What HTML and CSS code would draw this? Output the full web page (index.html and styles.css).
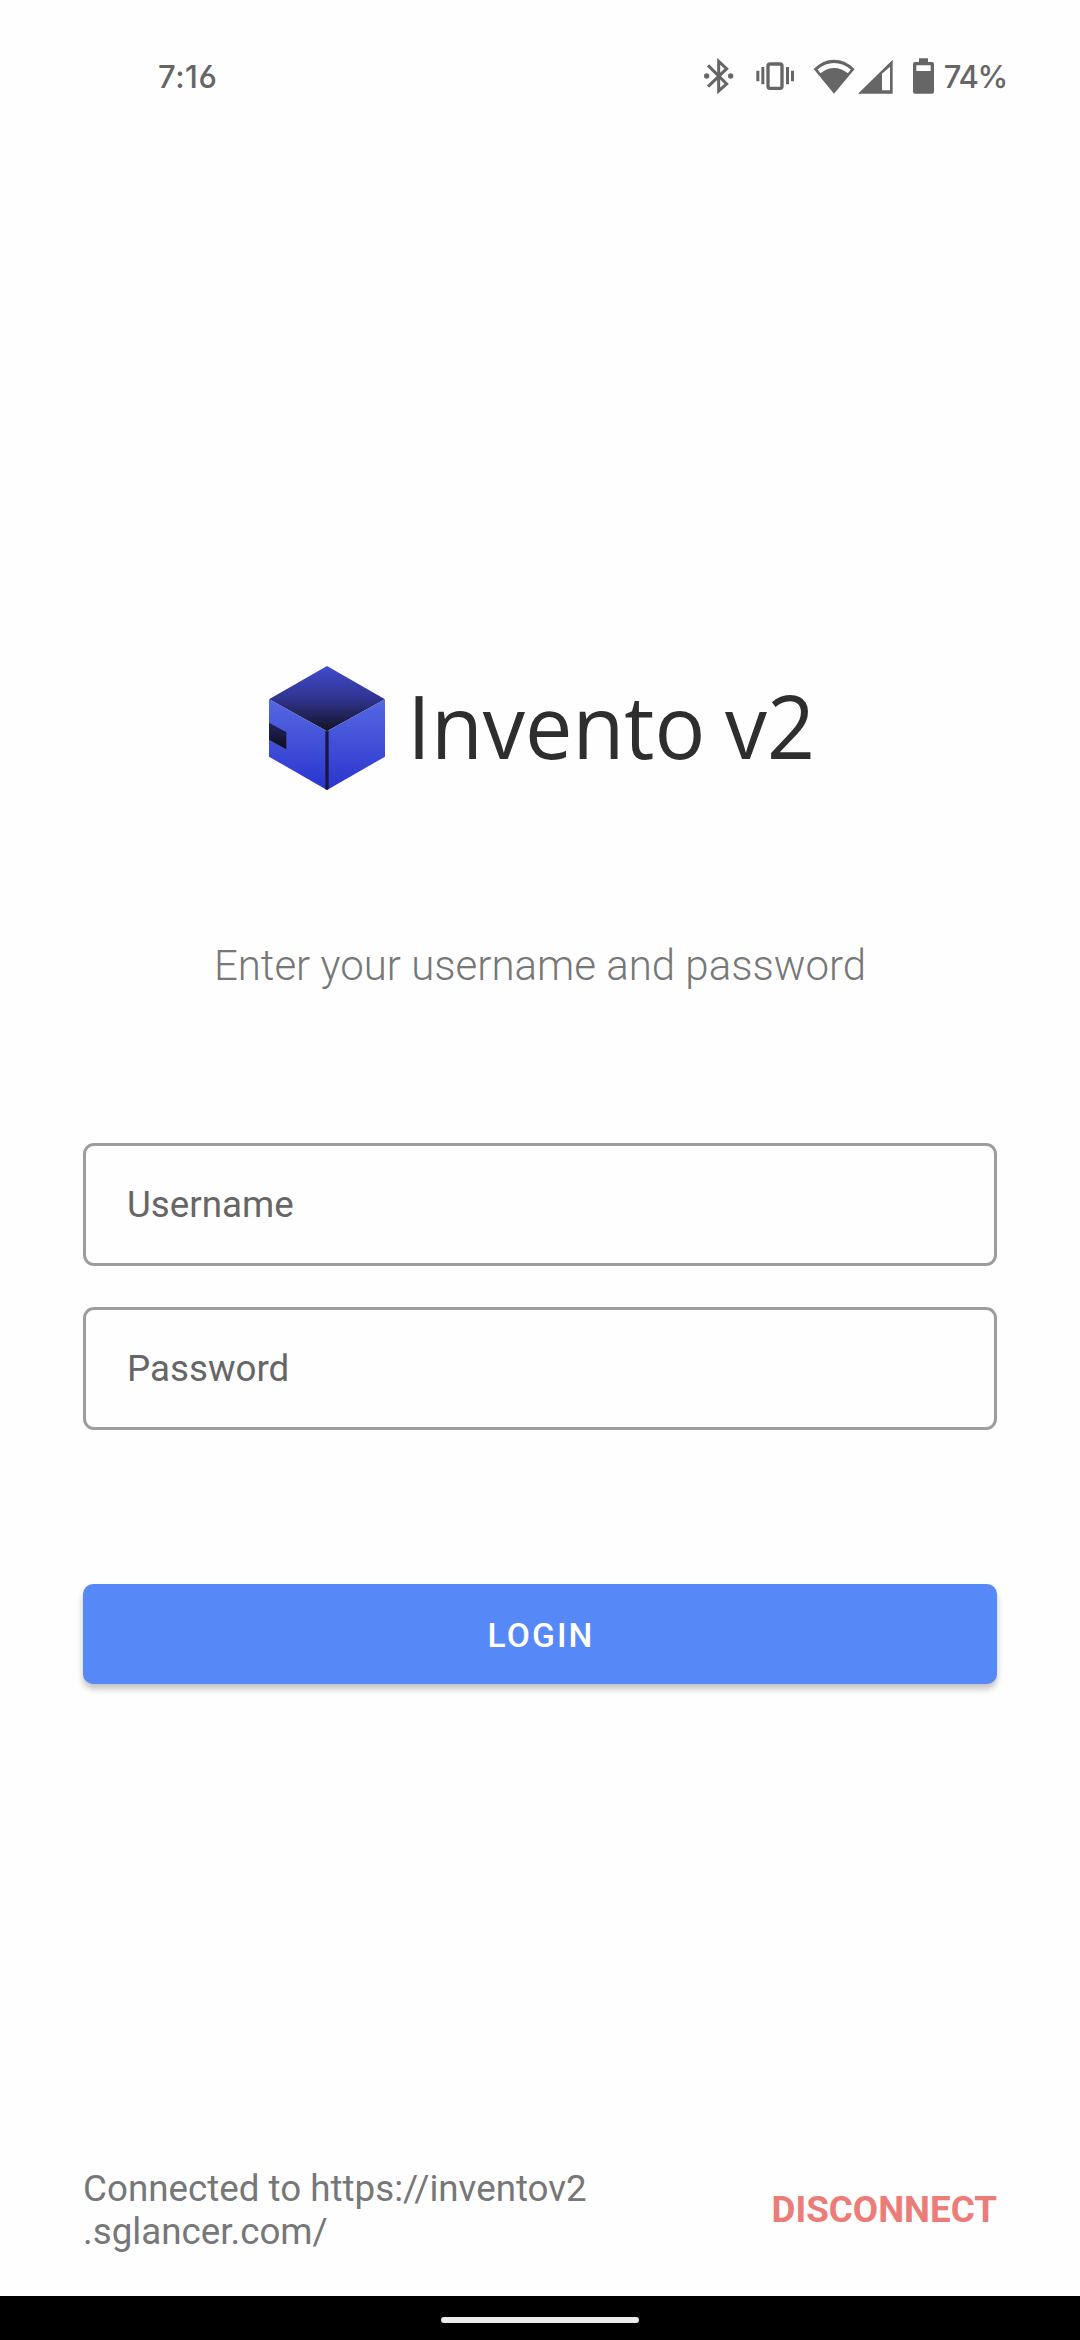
FILE: index.html
```html
<!DOCTYPE html>
<html lang="en">
<head>
<meta charset="utf-8">
<title>Invento v2</title>
<link rel="stylesheet" href="styles.css">
</head>
<body>
<header class="status">
  <span class="clock">7:16</span>
  <div class="status-icons">
    <svg class="bluetooth" width="32" height="36" viewBox="38 52 96 108"><path d="M53 74 109 130 85 151V62L109 84 53 138" fill="none" stroke="#666" stroke-width="9"/><circle cx="49" cy="106" r="8"/><circle cx="121" cy="106" r="8"/></svg>
    <svg class="vibrate" width="40" height="30" viewBox="192 62 120 90"><rect x="231" y="71" width="42" height="73" rx="6" fill="none" stroke="#666" stroke-width="10"/><path d="M211 80h9v52h-9zM196 91h9v32h-9zM285 80h9v52h-9zM300 91h9v32h-9z"/></svg>
    <svg class="wifi" width="42" height="35" viewBox="367 54 126 105"><path d="M430 158 369 84Q396 56 430 56T492 84Z"/><path d="M385 91Q430 56 476 91" fill="none" stroke="#fefefe" stroke-width="14"/></svg>
    <svg class="signal" width="35" height="35" viewBox="501 54 105 105"><path fill-rule="evenodd" d="M501 158 605 56V158ZM573 98V148H597V77Z"/></svg>
    <svg class="battery" width="21" height="36" viewBox="66 51 63 108"><path fill-rule="evenodd" d="M84 52h27v11h12q6 0 6 6v83q0 6-6 6H72q-6 0-6-6V69q0-6 6-6h12zM76 73v17h43V73z"/></svg>
    <span class="percent">74%</span>
  </div>
</header>

<main class="login">
  <h1 class="brand">
    <svg class="logo" width="116" height="124" viewBox="57 48 348 372">
      <defs>
        <linearGradient id="inside" x1="0" y1="0" x2="0" y2="1"><stop offset="0" stop-color="#414bce"/><stop offset=".5" stop-color="#30348f"/><stop offset="1" stop-color="#131325"/></linearGradient>
        <linearGradient id="face" x1="0" y1="0" x2="0" y2="1"><stop offset="0" stop-color="#5468e2"/><stop offset=".5" stop-color="#414fd8"/><stop offset="1" stop-color="#2a34ce"/></linearGradient>
        <linearGradient id="slot" x1="0" y1="0" x2="0" y2="1"><stop offset="0" stop-color="#22245e"/><stop offset="1" stop-color="#0e0e1c"/></linearGradient>
      </defs>
      <path d="M231 48 405 148 231 244 57 148Z" fill="url(#inside)"/>
      <path d="M57 148 231 244V420L57 320Z" fill="url(#face)"/>
      <path d="M405 148 231 244V420L405 320Z" fill="url(#face)"/>
      <path d="M226 242 231 244 236 242V417L231 420 226 417Z" fill="#17183c"/>
      <path d="M57 218 109 247V298L57 269Z" fill="url(#slot)"/>
    </svg>
    <svg class="wordmark" width="430" height="124" viewBox="400 666 430 124"><text x="407.3" y="758.7" textLength="298" lengthAdjust="spacingAndGlyphs">Invento</text><text x="725" y="758.7" textLength="90" lengthAdjust="spacingAndGlyphs">v2</text></svg>
  </h1>
  <p class="prompt">Enter your username and password</p>
  <div class="field">Username</div>
  <div class="field">Password</div>
  <button class="submit">LOGIN</button>
</main>

<footer class="connection">
  <p class="server">Connected to https://inventov2<br>.sglancer.com/</p>
  <a class="disconnect">DISCONNECT</a>
</footer>
<nav class="gesture"><div class="handle"></div></nav>
</body>
</html>
```
FILE: styles.css
```css
* { box-sizing: border-box; }
body {
  margin: 0;
  width: 1080px;
  height: 2340px;
  display: flex;
  flex-direction: column;
  background: #fefefe;
  font-family: Roboto, sans-serif;
  overflow: hidden;
}
h1, p { margin: 0; }
svg { display: block; flex: none; }

.status {
  height: 152px;
  padding: 0 73px 0 158px;
  display: flex;
  justify-content: space-between;
  align-items: center;
  color: #666;
  fill: #666;
  font: 500 31px Inter, sans-serif;
  font-feature-settings: "cv03", "calt" 0;
}
.clock { letter-spacing: 0.5px; }
.status-icons { display: flex; align-items: center; }
.vibrate { margin-left: 20px; }
.wifi { margin-left: 18px; }
.signal { margin-left: 3px; }
.battery { margin-left: 20px; }
.percent { margin-left: 10px; letter-spacing: -1.3px; }

.login {
  padding: 514px 83px 0;
  display: flex;
  flex-direction: column;
}
.brand {
  height: 124px;
  padding-left: 186px;
  display: flex;
  gap: 15px;
}
.wordmark {
  overflow: visible;
  font: 400 87.4px "Open Sans", sans-serif;
  fill: #2e2e2e;
}
.prompt {
  margin: 151px 0 153px;
  text-align: center;
  font-size: 42px;
  font-weight: 300;
  line-height: 49px;
  color: #777;
}
.field {
  height: 123px;
  margin-bottom: 41px;
  padding-left: 41px;
  display: flex;
  align-items: center;
  border: 3px solid #9d9d9d;
  border-radius: 11px;
  font-size: 36.75px;
  color: #666;
}
.submit {
  height: 100px;
  margin-top: 113px;
  padding: 2px 0 0 2px;
  border: 0;
  border-radius: 10px;
  background: #5688f7;
  box-shadow: 0 5px 6px rgba(0, 0, 0, .23);
  color: #fff;
  font: 500 33.6px Roboto, sans-serif;
  letter-spacing: 2.1px;
}
.connection {
  margin-top: auto;
  padding: 0 83px 43px;
  display: flex;
  justify-content: space-between;
  align-items: center;
  font-size: 36.75px;
  line-height: 43px;
  color: #777;
}
.disconnect { padding-bottom: 2px; font-weight: 700; color: #ec7c78; }
.gesture {
  height: 44px;
  padding-top: 4px;
  display: flex;
  justify-content: center;
  align-items: center;
  background: #000;
}
.handle { width: 198px; height: 6px; border-radius: 3px; background: #ebebeb; }
```
